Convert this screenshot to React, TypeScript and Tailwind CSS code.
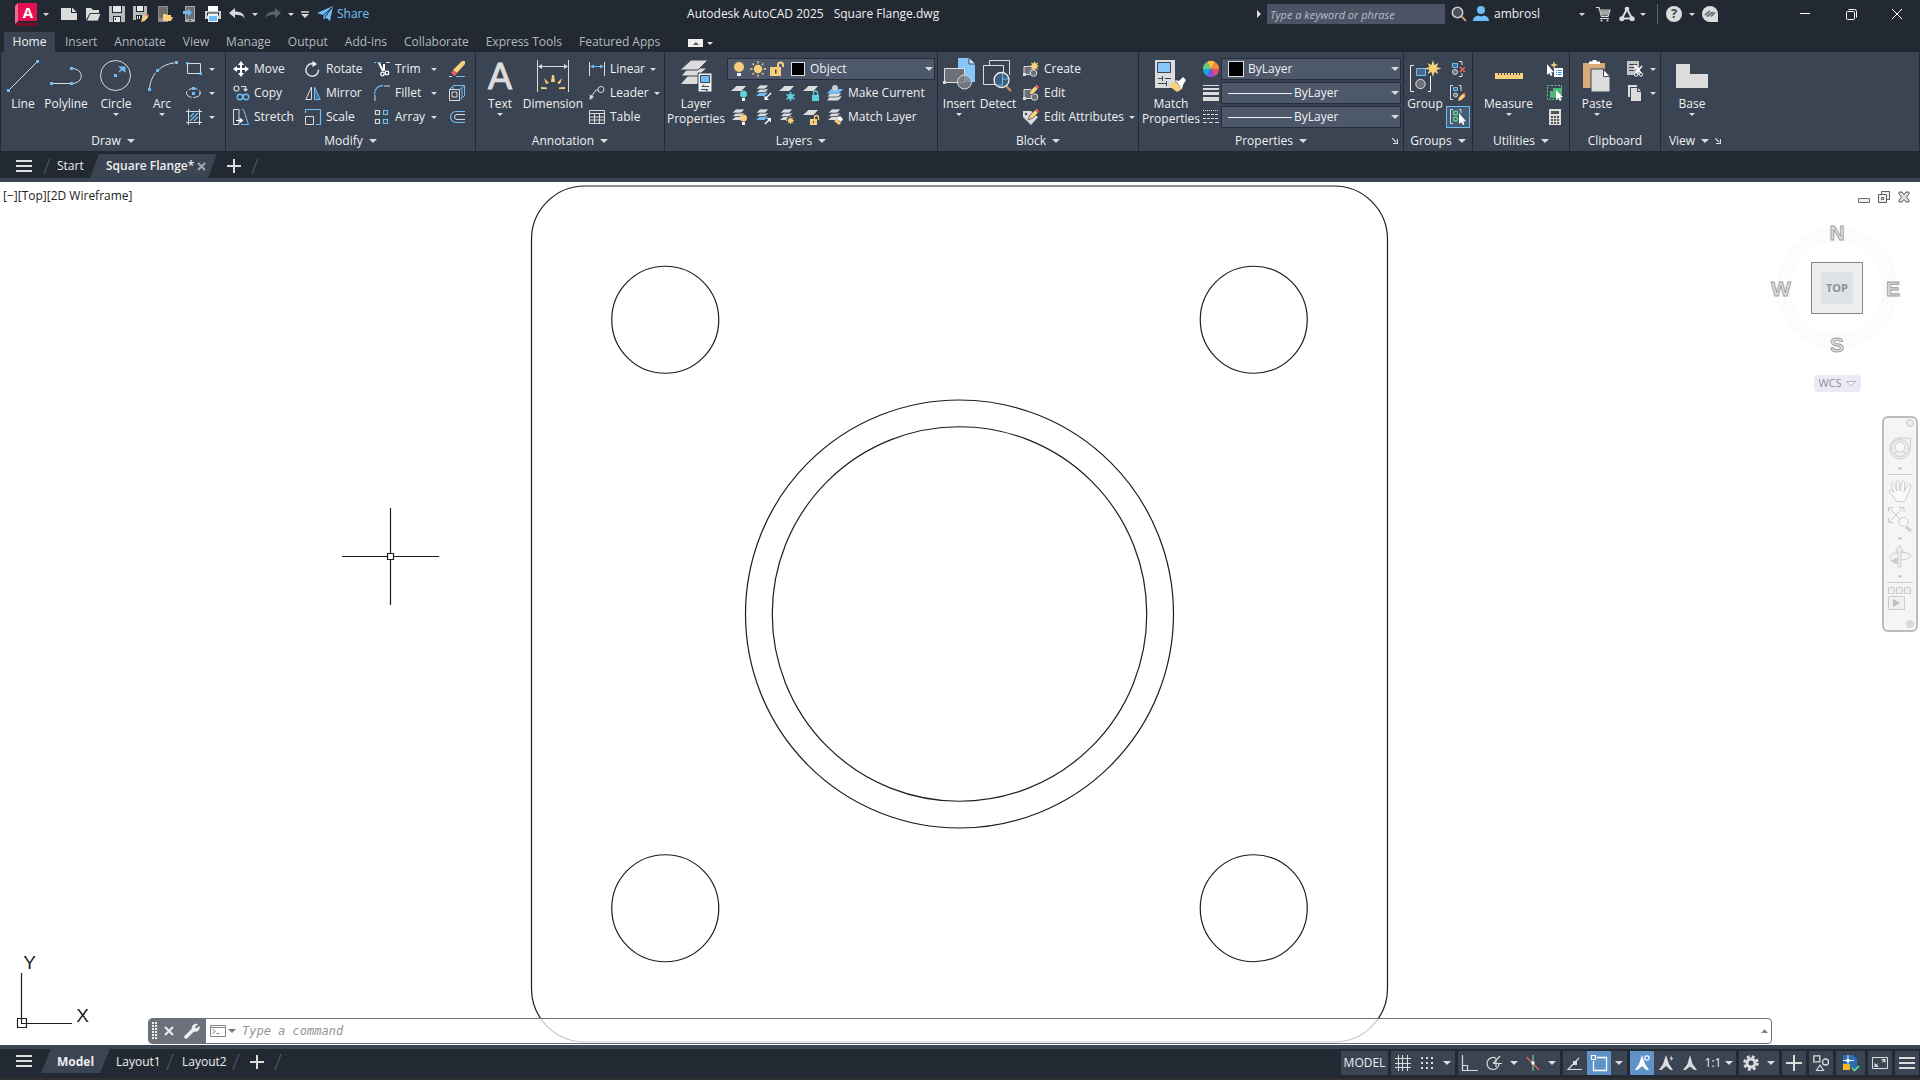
import type { ReactNode } from "react";
import clsx from "clsx";

const L = "#dcdcdc";
const B = "#6fbdf7";
const Y = "#f8cf7b";
const T = "#5fd3dc";
const R = "#f0605f";
const G = "#5ed18a";

const pencil = (
  <g>
    <path d="M8 16l1-3.500 4-4 2.500 2.500-4 4z" fill={Y} />
    <path d="M13 8.500l1-1 2 2-1 1.500z" fill={R} />
  </g>
);
const sheets = (c1: string, c2: string, c3: string) => (
  <g>
    <path d="M5 7.500h8l-3.500 3.500H1z" fill={c3} />
    <path d="M5 4h9l-4 3.500H1z" fill={c2} stroke="#3b4453" strokeWidth=".7" />
    <path d="M5 0h9l-4 4H1z" fill={c1} stroke="#3b4453" strokeWidth=".7" />
  </g>
);
const sheet = <path d="M5.500 1H15l-4.500 5H0z" fill={L} />;
const bulb = (c: string) => (
  <g>
    <circle cx="12.500" cy="9" r="3.500" fill={c} />
    <path d="M11 13h3v3h-3z" fill="#f5f5f5" />
  </g>
);

// 16 x 16 glyphs
const SMALL: Record<string, ReactNode> = {
  new: <><path d="M0 2h10v5h6v7H0z" fill={L} /><path d="M11 1.500L15.500 6H11z" fill={L} /></>,
  open: <><path d="M1 14V2h5l2 2h6v3H5z" fill={L} /><path d="M5 7.500h11L13 15H1.500z" fill={L} stroke="#222933" strokeWidth=".8" /></>,
  save: <><path d="M0 0h16v16H0z" fill="#b9b9b9" /><path d="M3 0h10v7H3zM4 10h8v6H4z" fill="#222933" /><path d="M4 0h8v6H4zM5 11h6v5H5z" fill="#e8e8e8" /><path d="M6 12h1v2H6z" fill="#222933" /></>,
  saveas: <><path d="M0 0h14v8l-5 6H0z" fill="#b9b9b9" /><path d="M3 0h8v6H3zM3 9h6v5H3z" fill="#222933" /><path d="M4 0h6v5H4zM4 10h1v3H4zM6 10h1v3H6z" fill="#e8e8e8" />{pencil}</>,
  openweb: <><path d="M1 0h10v16H1z" fill="#8d8d8d" /><path d="M2 1h8v11H2z" fill="#6b6b6b" /><path d="M6 15V8h3l1 1h4v2h2l-2 4z" fill={Y} /></>,
  saveweb: <><path d="M4 0h10v16H4z" fill="#a8a8a8" /><path d="M5 1h8v12H5z" fill="#6f6f6f" /><path d="M8 14h2v1H8z" fill="#333" /><path d="M2 5h5V2.500L11 6.500 7 10.500V8H2z" fill={B} /></>,
  print: <><path d="M3 0h10v5H3z" fill="#fff" /><path d="M0 5h16v8H0z" fill="#cfcfcf" /><path d="M2 6.500h12v3H2z" fill="#222933" /><path d="M3 7.500h10V16H3z" fill="#f1f1f1" /><path d="M4 10h8v5H4z" fill={B} /></>,
  undo: <path d="M0 7l6-5v3.500c6 0 9.500 2.500 9.500 7C14 9.500 11 8.800 6 8.800V12z" fill={L} />,
  redo: <path d="M16 7l-6-5v3.500c-6 0-9.500 2.500-9.500 7C2 9.500 5 8.800 10 8.800V12z" fill="#5b616c" />,
  share: <><path d="M0 7L16 0 8 12 6 9z" fill={B} /><path d="M16 0l-3 15-4-3.500L6 14V9.500L16 0z" fill={B} /><path d="M6 14V9.500L15 1.500 8 11" fill="none" stroke="#222933" /></>,
  search: <><path d="M10 10l5 5" stroke="#c99a5f" strokeWidth="2" /><circle cx="6.500" cy="6.500" r="5.200" fill="#4a4f59" stroke="#c8c8c8" strokeWidth="1.600" /></>,
  user: <><circle cx="8" cy="4" r="4" fill={B} /><path d="M0 15c0-4 3-5 5-5.500l3 1 3-1c2 .5 5 1.500 5 5.500z" fill={B} /></>,
  cart: <><path d="M1 1.500h3l2.500 9H13L15 4H4.500" fill="none" stroke={L} strokeWidth="1.200" /><path d="M5 4.500h9.500L13 9.500H6.300z" fill="#a6a6a6" /><path d="M5 12.500h9" stroke={L} /><circle cx="6.500" cy="14.500" r="1" fill={L} /><circle cx="12.500" cy="14.500" r="1" fill={L} /></>,
  apps: <><path d="M8 3L3 12.500h10z" fill="none" stroke={L} strokeWidth="2" /><circle cx="8" cy="3" r="2.300" fill={L} /><circle cx="2.800" cy="12.800" r="2.500" fill={L} /><circle cx="13.200" cy="12.800" r="2.500" fill={L} /></>,
  assist: <><path d="M8 0a8 8 0 018 8v8H8A8 8 0 018 0z" fill={L} /><path d="M3 9l5-4M5 10.500L11 6M9 10.500l4-4" stroke="#666d78" strokeWidth="1.700" /></>,
  rect: <><path d="M1.500 2.500h13v10h-13z" fill="none" stroke={L} /><path d="M0 1h2.500v2.500H0zM13.500 11.500H16V14h-2.500z" fill={B} /></>,
  ellipse: <><ellipse cx="7.500" cy="8" rx="7" ry="4.500" fill="none" stroke={L} strokeDasharray="9 2" /><path d="M6 2h3v3H6zM6 7h3v3H6zM13 7h2v2h-2z" fill={B} /></>,
  hatch: <><path d="M2.500 0v16M13.500 0v16M0 2.500h16M0 13.500h16" stroke={L} /><path d="M4 8l4-4M4 12l8-8M8 12l4-4" stroke={B} strokeWidth="1.400" /></>,
  move: <path d="M8 0l3 4H9v3h3V5l4 3-4 3V9H9v3h2l-3 4-3-4h2V9H4v2L0 8l4-3v2h3V4H5z" fill="#fff" />,
  rotate: <><path d="M9.500 2.800a6.300 6.300 0 105 5.800" fill="none" stroke={L} strokeWidth="1.600" transform="translate(-1 0)" /><path d="M7.500 0L12 3 7.500 6z" fill="#fff" /></>,
  trim: <><path d="M0 1.500h7" stroke={B} strokeDasharray="2 1" /><path d="M12 1.500h4" stroke={L} /><path d="M5 2l4 8M10 3v7" stroke="#fff" strokeWidth="2" /><circle cx="8.500" cy="13" r="1.800" fill="none" stroke="#fff" strokeWidth="1.300" /><circle cx="13" cy="12" r="1.800" fill="none" stroke="#fff" strokeWidth="1.300" /></>,
  erase: <><path d="M13 0h3v3L8 12 4 9z" fill={Y} /><path d="M4 9l4 3.500L5.500 15 2 12z" fill={R} /><path d="M0 15.500h3" stroke={L} /><path d="M7 15.500h9" stroke={B} /></>,
  copy: <><circle cx="3.500" cy="3.500" r="2.500" fill="none" stroke={L} strokeWidth="1.200" /><path d="M8 1.500h4.500V5M10.500 4l2 2 2-2" fill="none" stroke={L} strokeWidth="1.200" /><circle cx="7" cy="12" r="2.700" fill="none" stroke={B} strokeWidth="1.400" /><circle cx="13" cy="12" r="2.700" fill="none" stroke={B} strokeWidth="1.400" /></>,
  mirror: <><path d="M6.500 2v12.500H.8z" fill="none" stroke={L} /><path d="M9.500 2v12.500h5.700z" fill="#3f6f96" stroke={B} /></>,
  fillet: <><path d="M.5 9C.5 4 4 .5 9 .5" fill="none" stroke={B} strokeWidth="1.300" /><path d="M1 10v6M10 1h6" stroke={L} /></>,
  box: <><path d="M.5 4.500h10v11H.5zM3 7h5v5H3z" fill="none" stroke={L} /><path d="M.5 4.500l4-4h11v10l-4 4M10.500 4.500l5-4M4 4V1M13 3v10" fill="none" stroke={B} /></>,
  stretch: <><path d="M.5.500H6v15H.5z" fill="none" stroke={L} /><path d="M9 .5h1.500L15.500 15.500H8" fill="none" stroke={B} /><path d="M3 11.500h5M7 9.500l3 2-3 2z" fill="#fff" stroke="#fff" /></>,
  scale: <><path d="M.5 4V.5h15v15H11" fill="none" stroke={B} strokeWidth="1.200" /><path d="M.5 7.500h8v8h-8z" fill="none" stroke={L} /></>,
  array: <><path d="M1.500 1.500h4v4h-4zM1.500 10.500h4v4h-4z" fill="none" stroke={L} strokeWidth="1.200" /><path d="M9.500 1.500h4v4h-4zM9.500 10.500h4v4h-4z" fill="none" stroke={B} strokeWidth="1.200" /></>,
  offset: <><path d="M16 2.500H7a5.500 5.500 0 000 11h9" fill="none" stroke={B} strokeWidth="1.200" /><path d="M16 5.500H8a2.500 2.500 0 000 5h8" fill="none" stroke={L} /></>,
  linear: <><path d="M.5 1v14M15.500 1v14" stroke={L} /><path d="M2 5.500h12" stroke={B} /><path d="M1 5.500l4-2v4zM15 5.500l-4-2v4z" fill={B} /></>,
  leader: <><circle cx="12" cy="4.500" r="3" fill="none" stroke={L} /><path d="M9 5H7L2 12" fill="none" stroke={L} /><path d="M.5 15l.5-5.500 4 2.500z" fill={L} /></>,
  table: <path d="M.5 1.500h15v13H.5zM.5 4.500h15M.5 8h15M.5 11h15M5.500 4v10M10.500 4v10" fill="none" stroke={L} />,
  bulb: <><circle cx="8" cy="6" r="5" fill={Y} /><path d="M6 12h4v3H6z" fill="#f5f5f5" /></>,
  sun: <><circle cx="8" cy="8" r="4.200" fill={Y} /><path d="M8 0v2.500M8 13.500V16M0 8h2.500M13.500 8H16M2.500 2.500l1.500 1.500M12 12l1.500 1.500M13.500 2.500L12 4M4 12l-1.500 1.500" stroke={Y} strokeWidth="1.300" /></>,
  unlock: <><path d="M1 6h11v9H1z" fill={Y} /><path d="M9 7V4a2.500 2.500 0 015 0v2" fill="none" stroke={Y} strokeWidth="2" /><path d="M6 8.500h1.500v4H6z" fill="#3b4453" /></>,
  layoff: <>{sheet}{bulb(T)}</>,
  layiso: <>{sheets(L, L, B)}<path d="M16 8l-5 5" stroke="#fff" strokeWidth="1.400" /><path d="M9.500 10.500V15H14z" fill="#fff" /></>,
  layfrz: <>{sheet}<path d="M11.500 7v9M7.500 9.500l8 4.500M15.500 9.500l-8 4.500" stroke={T} strokeWidth="1.500" /><circle cx="11.500" cy="11.500" r="2.300" fill="none" stroke={T} /></>,
  laylck: <>{sheet}<path d="M9 10h7v6H9z" fill={T} /><path d="M10.500 10V8a2 2 0 014 0v2" fill="none" stroke={T} strokeWidth="1.300" /></>,
  laycur: <><path d="M3 11.500h12l-4 4H0z" fill={L} /><path d="M3 8h12l-4 4H0z" fill={L} stroke="#3b4453" strokeWidth=".7" /><path d="M4 4h12l-4 4.500H0z" fill={B} /><circle cx="8" cy="3" r="3" fill="#c9c9c9" /></>,
  layon: <>{sheets(L, L, L)}{bulb(Y)}</>,
  layuniso: <>{sheets(L, L, B)}<path d="M10 15l4-4" stroke="#fff" strokeWidth="1.400" /><path d="M11.500 9H16v4.500z" fill="#fff" /></>,
  laythw: <>{sheets(L, L, L)}<circle cx="11.500" cy="11.500" r="4" fill="#3b4453" /><circle cx="11.500" cy="11.500" r="2.500" fill={Y} /><path d="M11.500 7v9M7 11.500h9M8.500 8.500l6 6M14.500 8.500l-6 6" stroke={Y} strokeDasharray="1.300 5.500" /></>,
  layulk: <>{sheet}<path d="M7 10h7v6H7z" fill={Y} /><path d="M11.500 10V8.500a2 2 0 014 0V11" fill="none" stroke={Y} strokeWidth="1.300" /><path d="M10 12h1v2h-1z" fill="#3b4453" /></>,
  laymch: <>{sheets(L, L, L)}<path d="M7 12l3-2 4 4-2 2z" fill={Y} /><path d="M10 10l3-3 3 3-2 3z" fill="#fff" /></>,
  create: <><path d="M1 5.500h9v8H1z" fill="#6b7079" stroke={L} /><path d="M0 12h3v3H0z" fill={L} /><circle cx="10.500" cy="12" r="3.300" fill="#6b7079" stroke={L} /><path d="M11.500 0l1 2.500 2.500-1-1 2.500 2 1-2 1 1 2.500-2.500-1-1 2.500-1-2.500-2.500 1 1-2.500-2-1 2-1-1-2.500 2.500 1z" fill={Y} /></>,
  edit: <><path d="M1 4.500h9v9H1z" fill="#6b7079" stroke={L} /><path d="M0 12h3v3H0z" fill={L} /><circle cx="11.500" cy="12" r="3.300" fill="#6b7079" stroke={L} /><path d="M6 10l1-4 5-5 3 3-5 5z" fill={Y} stroke="#3b4453" strokeWidth=".7" /><path d="M12 1l1.500-1.500L16 2l-1 2z" fill={R} /></>,
  attr: <><path d="M0 2h8l7 6-7 8-8-8z" fill={L} /><circle cx="3" cy="5" r="1.200" fill="#3b4453" /><path d="M5 11l2-5 5-5 3 3-5 5z" fill={Y} stroke="#3b4453" strokeWidth=".7" /><path d="M12 1l1.500-1.500L16 2l-1 2z" fill={R} /></>,
  wheel: <><path d="M8 8L4 1a8 8 0 018 0z" fill="#ffc04a" /><path d="M8 8l4-7a8 8 0 014 7z" fill="#f98a3c" /><path d="M8 8h8a8 8 0 01-4 7z" fill="#e64f6b" /><path d="M8 8l4 7a8 8 0 01-8 0z" fill="#8a4ee8" /><path d="M8 8l-4 7a8 8 0 01-4-7z" fill="#18a9d8" /><path d="M8 8H0a8 8 0 014-7z" fill="#5fce7d" /></>,
  weight: <path d="M0 0h16v1H0zM0 3h16v2H0zM0 7h16v3H0zM0 12h16v4H0z" fill={L} />,
  ltype: <><path d="M0 1.500h16" stroke={L} strokeDasharray="1 1" /><path d="M0 5.500h16M0 9.500h16" stroke={L} strokeDasharray="3 1" /><path d="M0 13.500h16" stroke={L} strokeDasharray="4 2" /></>,
  ungroup: <><path d="M2.500 2.500h5v4h-5z" fill="#3f6f96" stroke={B} /><circle cx="5" cy="11" r="2.500" fill="#6b7079" stroke={L} /><path d="M9 .5h3V4M9 15.500h3V12" fill="none" stroke={L} /><path d="M10 6l5 5M15 6l-5 5" stroke={R} strokeWidth="1.600" /></>,
  groupedit: <><path d="M3 .5H.5v14H3M9 .5h2V6" fill="none" stroke={L} /><path d="M3.500 2.500h4v3h-4z" fill="#3f6f96" stroke={B} /><circle cx="5.500" cy="10" r="2" fill="#6b7079" stroke={L} />{pencil}</>,
  groupsel: <><path d="M3 .5H.5v14H3M9 .5h2V4" fill="none" stroke={L} /><path d="M3.500 2.500h4v3h-4zM5.500 8a2 2 0 100 4 2 2 0 000-4z" fill="none" stroke={G} strokeWidth="1.300" /><path d="M9 4v11l2.300-2 1.500 3 1.700-.8-1.300-3H16z" fill="#fff" /></>,
  quick: <><path d="M0 3v11l2.300-2 1.500 3 1.700-.8-1.300-3H7z" fill="#fff" /><path d="M7 0l1 3 3 1-3 1-1 3-1-3-3-1 3-1z" fill={Y} /><path d="M7 7h9v9H7z" fill="#fff" /><path d="M9 9.500h1M9 11.500h1M9 13.500h1M11 9.500h3.500M11 11.500h3.500M11 13.500h3.500" stroke="#2588d8" /></>,
  selall: <><path d="M.5.500h14v14H.5z" fill="none" stroke={G} strokeDasharray="2 1.500" /><path d="M3 6h3V3h9v7h-4v3H3z" fill="#4fb77a" /><path d="M9 5v10l2.300-2 1.500 3 1.700-.8-1.300-3H16z" fill="#fff" /></>,
  calc: <><path d="M2 0h12v16H2z" fill={L} /><path d="M4 2h8v3H4zM4 7h2v2H4zM7 7h2v2H7zM10 7h2v2h-2zM4 10h2v2H4zM7 10h2v2H7zM10 10h2v2h-2zM4 13h2v2H4zM7 13h2v2H7zM10 13h2v2h-2z" fill="#555" /></>,
  cut: <><path d="M0 0h12v14H0z" fill="#c4c4c4" /><path d="M2 3.500h8M2 6.500h5M2 9.500h5" stroke="#3b4453" /><path d="M7 4l7 8M15 5l-6 7" stroke="#fff" strokeWidth="1.600" /><circle cx="9" cy="13.500" r="1.700" fill="#3b4453" stroke="#fff" /><circle cx="14" cy="13.500" r="1.700" fill="#3b4453" stroke="#fff" /></>,
  copyclip: <><path d="M1 0v12h2V2h7V0z" fill={L} /><path d="M4 3h6v4h4v9H4zM11 3l3 3h-3z" fill={L} /></>,
  grid: <path d="M3.500 0v16M7.500 0v16M12.500 0v16M0 3.500h16M0 8.500h16M0 12.500h16" stroke={L} />,
  dots: <path d="M2 3h12M2 8h12M2 13h12" stroke={L} strokeWidth="2" strokeDasharray="2 3" />,
  ortho: <path d="M.5 0v15.500H16M.5 10.500h5v5" fill="none" stroke={L} strokeWidth="1.200" />,
  polar: <><path d="M13 8.500a6 6 0 11-3-5.200" fill="none" stroke={L} strokeWidth="1.200" /><path d="M7 8.500h9M7 8.500L14 1M10 4v8" fill="none" stroke={L} strokeWidth="1.200" /></>,
  iso: <><path d="M1.500 2L14 15" stroke={R} strokeWidth="1.300" /><path d="M8 0v16" stroke={G} strokeWidth="1.300" /><path d="M6.500 6.500h3v3h-3z" fill="#fff" /></>,
  track: <><path d="M15 14.500H1L12 3" fill="none" stroke={L} strokeWidth="1.200" /><path d="M6 6h4v4H6z" fill={L} /></>,
  osnap: <><path d="M6 2.500h9.500v13h-13V6" fill="none" stroke="#fff" strokeWidth="1.300" /><path d="M.5.500h4v4h-4z" fill="none" stroke="#fff" strokeWidth="1.200" /></>,
  anno1: <><path d="M8 0l3 9 4 6h-2.500L8 11l-4.500 4H1l4-6z" fill="#fff" /><circle cx="13" cy="3" r="2.200" fill="#5f93c8" stroke="#fff" strokeWidth="1.200" /></>,
  anno2: <><path d="M8 0l3 9 4 6h-2.500L8 11l-4.500 4H1l4-6z" fill={L} /><path d="M14 0l-3 4h2l-1 3 4-4h-2z" fill={L} stroke="#3b4453" strokeWidth=".5" /></>,
  anno3: <path d="M8 0l2.500 9 4.500 6h-2.500L8 11.500 3.500 15H1l4.500-6z" fill={L} />,
  gear: (
    <g fill="none" stroke={L}>
      <circle cx="8" cy="8" r="4" strokeWidth="3" />
      <circle cx="8" cy="8" r="6.300" strokeWidth="3" strokeDasharray="2.800 2.150" />
    </g>
  ),
  plus: <path d="M8 0v16M0 8h16" stroke={L} strokeWidth="2" />,
  shapes: <><path d="M.8.800h6v6h-6z" fill="none" stroke={L} strokeWidth="1.300" /><circle cx="12.500" cy="7" r="3" fill="none" stroke={L} strokeWidth="1.300" /><path d="M7 10l3.500 5.500h-7z" fill="none" stroke={L} strokeWidth="1.200" /></>,
  dwg: <><path d="M0 0h10l4 4v9H0z" fill="#2c6cb5" /><path d="M0 9h7v6H0z" fill="#f6b62a" /><path d="M5 0v9M0 5.500h11" stroke="#e8f1fa" /><path d="M3.500 4h3v3h-3z" fill="#fff" /><path d="M9 13l2.500 2.500L16 11" fill="none" stroke={G} strokeWidth="1.800" /></>,
  full: <><path d="M.5 2.500h15v11H.5z" fill="none" stroke={L} /><path d="M9 4h4.500v4zM7 12H2.500V8z" fill={L} /><path d="M4 10.500l2-2M12 5.500l-2 2" stroke={L} /></>,
  menu: <path d="M0 3h16M0 8h16M0 13h16" stroke={L} strokeWidth="2" />,
};

// 32 x 32 glyphs
const LARGE: Record<string, ReactNode> = {
  line: <><path d="M1.500 30.500l29-29" stroke={L} /><path d="M0 29h3v3H0zM29 0h3v3h-3z" fill={B} /></>,
  polyline: <><path d="M1.500 23.500h20M21.500 8.500c13 0 13 15 0 15" fill="none" stroke={L} /><path d="M0 22h3v3H0zM20 22h3v3h-3zM20 7h3v3h-3z" fill={B} /></>,
  circle: <><circle cx="15.500" cy="15.500" r="15" fill="none" stroke={L} /><path d="M14 14h3v3h-3z" fill={B} /><path d="M19 12l4-4" stroke={B} strokeWidth="1.500" /><path d="M18 6.500h7.500V13z" fill={B} /></>,
  arc: <><path d="M3.500 29.500C4 15 14 4 30.500 2.500" fill="none" stroke={L} strokeDasharray="18 4" /><path d="M2 28h3v3H2zM10 9h3v3h-3zM29 1h3v3h-3z" fill={B} /></>,
  text: <text x="16" y="29" textAnchor="middle" fontSize="36" className="font-['Liberation_Sans',sans-serif]" fill={L} stroke={L} strokeWidth="1">A</text>,
  dimension: <><path d="M.5 0v32M31.500 0v32M2 6.500h28" stroke={L} /><path d="M1 6.500L5 4v5zM31 6.500L27 4v5z" fill={L} /><path d="M15 15h2l1 7h-4zM7 18l5 5-3 1zM25 18l-5 5 3 1zM4 27l6 .5V29H4zM28 27l-6 .5V29h6z" fill={Y} /></>,
  layers: <><path d="M8 16h16l-7 8H1z" fill={L} /><path d="M8 8h19l-9 8H1z" fill={L} stroke="#3b4453" /><path d="M11 0h17L18 10H0z" fill={L} stroke="#3b4453" /><path d="M18 13h14v19H18z" fill="#f0f0f0" stroke="#3b4453" /><path d="M20.500 15.500h9v7h-9z" fill={B} stroke="#3b4453" /><path d="M22 26.500h7M21 29.500h7M24 24.500l-2 2M26 31l2-1.500" stroke="#3b4453" /></>,
  insert: <><path d="M15-2h11l6 6v18H15z" fill="#86c6fa" /><path d="M26-2v6h6" fill="#cfe8fd" stroke="#3b4453" /><path d="M1.500 8.500h20v14h-20z" fill="#6b7079" stroke={L} /><path d="M0 21h3v3H0z" fill={L} /><circle cx="21.500" cy="22" r="7" fill="#7d828a" fillOpacity=".8" stroke={L} /></>,
  detect: <><path d="M7.500 5V.5h20V15M1.500 5.500h20v19h-20z" fill="none" stroke={L} /><path d="M24 26l5 5" stroke="#c99a5f" strokeWidth="2" /><circle cx="19.500" cy="20" r="7.500" fill="#3f5f80" stroke="#f2f2f2" strokeWidth="1.300" /><path d="M20.500 13v12h-4M20.500 19h6" fill="none" stroke={B} /></>,
  match: <><path d="M0 0h20v28H0z" fill={L} /><path d="M2.500 2.500h13v10h-13z" fill="#86c6fa" stroke="#3b4453" /><path d="M3 18.500h4M10 18.500h6M7.500 16v5M3 23.500h8M11.500 21v5" stroke="#3b4453" /><path d="M14 26l6-5 7 8-5 3z" fill={Y} /><path d="M20 20l4 1 4-4 3 3-3 5-1 4z" fill="#fff" /></>,
  group: <><path d="M5 5.500H1.500v26H5M19 31.500h2.500V16" fill="none" stroke="#eee" /><path d="M7.500 8.500h9v7h-9z" fill="#4c6a8b" stroke={B} /><circle cx="11.500" cy="24" r="4.700" fill="#6b7079" stroke={L} /><path d="M24 0l1.500 5 4-2-2 4 5 1.500-5 1.500 2 4-4-2L24 17l-1.500-5-4 2 2-4-5-1.500 5-1.500-2-4 4 2z" fill={Y} /></>,
  measure: <><path d="M2 13h28v6H2z" fill={Y} /><path d="M5.500 13v2M8.500 13v2M11.500 13v2M14.500 13v2M17.500 13v2M20.500 13v2M23.500 13v2M26.500 13v2" stroke="#3b4453" /></>,
  paste: <><path d="M2 3h22v25H2z" fill="#d8ab76" /><path d="M8 4V1.500h3.500V0h4v1.500H19V4z" fill="#fff" /><path d="M10 9h13l6 7v16H10z" fill={L} stroke="#3b4453" /><path d="M22.500 9.500v7H29z" fill="#fff" stroke="#3b4453" /></>,
  base: <path d="M0 4h14v10h18v14H0z" fill={L} />,
};

function Icon({ name }: { name: string }) {
  return <svg width="16" height="16" viewBox="0 0 16 16" className="shrink-0 overflow-visible" aria-hidden="true">{SMALL[name]}</svg>;
}

function Caret({ big, className }: { big?: boolean; className?: string }) {
  return big ? (
    <svg width="8" height="4" className={clsx("shrink-0", className)} aria-hidden="true"><path d="M0 0h8L4 4z" fill={L} /></svg>
  ) : (
    <svg width="6" height="3" className={clsx("shrink-0", className)} aria-hidden="true"><path d="M0 0h6L3 3z" fill={L} /></svg>
  );
}

function IconButton({ name, className = "w-6" }: { name: string; className?: string }) {
  return (
    <button type="button" aria-label={name} className={clsx("flex h-6 shrink-0 items-center justify-center", className)}>
      <Icon name={name} />
    </button>
  );
}

function CaretButton({ label, big, className = "w-3" }: { label: string; big?: boolean; className?: string }) {
  return (
    <button type="button" aria-label={label} className={clsx("flex h-6 shrink-0 items-center justify-center", className)}>
      <Caret big={big} />
    </button>
  );
}

function BigTool({ icon, lines, menu, className }: { icon: string; lines: string[]; menu?: boolean; className: string }) {
  return (
    <button type="button" className={clsx("flex shrink-0 flex-col items-center pt-[3px]", className)}>
      <svg width="32" height="32" viewBox="0 0 32 32" className="overflow-visible" aria-hidden="true">{LARGE[icon]}</svg>
      <span className="mt-1 flex flex-col leading-[15px] whitespace-nowrap">
        {lines.map((l) => <span key={l}>{l}</span>)}
      </span>
      {menu && <Caret className="mt-0.5" />}
    </button>
  );
}

function Tool({ icon, label, menu }: { icon: string; label?: string; menu?: boolean }) {
  return (
    <button type="button" aria-label={label ?? icon} className="flex h-6 items-center gap-[5px] whitespace-nowrap">
      <Icon name={icon} />
      {label && <span>{label}</span>}
      {menu && <Caret className={label ? "ml-auto" : "ml-0.5"} />}
    </button>
  );
}

function Launcher() {
  return (
    <button type="button" aria-label="Panel settings">
      <svg width="6" height="6" aria-hidden="true"><path d="M0 0l4 4M5.500 1v4.500H1" fill="none" stroke={L} strokeWidth="1.200" /></svg>
    </button>
  );
}

type PanelProps = { title: string; menu?: boolean; launcher?: "edge" | "inline"; className: string; children: ReactNode };

function Panel({ title, menu = true, launcher, className, children }: PanelProps) {
  return (
    <section aria-label={title} className={clsx("flex shrink-0 flex-col pt-[5px]", className)}>
      <div className="flex h-[73px]">{children}</div>
      <div className="flex h-[21px] items-center justify-center">
        <span className="flex flex-1" />
        <button type="button" className="flex items-center gap-1.5">
          {title}
          {menu && <Caret big />}
        </button>
        {launcher === "inline" && <span className="ml-1.5 flex"><Launcher /></span>}
        <span className="flex flex-1 justify-end">{launcher === "edge" && <span className="mr-[5px] flex"><Launcher /></span>}</span>
      </div>
    </section>
  );
}

function Combo({ label, value, children, className }: { label: string; value: string; children?: ReactNode; className?: string }) {
  return (
    <label className={clsx("flex h-[22px] items-center border border-[#262e39] bg-[#4d586b]", className)}>
      {children}
      <select aria-label={label} defaultValue={value} className="min-w-0 flex-1 appearance-none bg-transparent outline-none">
        <option>{value}</option>
      </select>
      <Caret big className="mr-px" />
    </label>
  );
}

function TitleBar() {
  return (
    <header className="flex h-8 items-start justify-between">
      <div className="flex h-7 items-center pl-[15px]">
        <button type="button" aria-label="Application menu" className="flex items-center gap-1">
          <svg width="24" height="24" viewBox="0 0 24 24" aria-hidden="true">
            <path d="M0 4l3-3v20h21v1l-3 2H0z" fill="#7c0b2a" />
            <path d="M3 1h19v18H3z" fill="#e51050" />
            <path d="M0 4l3-3v18l-3 3z" fill="#ec6d8e" />
            <text x="13" y="16" textAnchor="middle" fontSize="15" fontWeight="700" fill="#fff">A</text>
          </svg>
          <Caret />
        </button>
        <span className="ml-2 flex">
          {["new", "open", "save", "saveas", "openweb", "saveweb", "print", "undo"].map((n) => <IconButton key={n} name={n} />)}
        </span>
        <CaretButton label="Undo list" />
        <IconButton name="redo" />
        <CaretButton label="Redo list" />
        <button type="button" aria-label="Customize" className="flex w-4 justify-center">
          <svg width="8" height="7"><path d="M0 1h8" stroke={L} strokeWidth="1.500" /><path d="M0 3h8L4 7z" fill={L} /></svg>
        </button>
        <button type="button" className="ml-1 flex items-center gap-1 text-[#74c1f5]"><Icon name="share" />Share</button>
      </div>
      <h1 className="flex h-7 items-center gap-2.5 text-[#f0f0f0]"><span>Autodesk AutoCAD 2025</span><span>Square Flange.dwg</span></h1>
      <div className="flex h-7 items-center">
        <svg width="4" height="8" className="mr-1.5"><path d="M0 0v8l4-4z" fill={L} /></svg>
        <input aria-label="Search" placeholder="Type a keyword or phrase" className="h-5 w-[178px] bg-[#4b5365] px-[3px] text-[11px] italic outline-none placeholder:text-[#b9bec8]" />
        <IconButton name="search" className="w-7" />
        <button type="button" className="flex items-center gap-[5px]"><Icon name="user" /><span className="w-[82px] text-left">ambrosl</span></button>
        <CaretButton label="Account menu" />
        <span className="ml-[3px] flex"><IconButton name="cart" /></span>
        <IconButton name="apps" />
        <CaretButton label="Apps menu" className="w-2" />
        <span className="ml-2.5 h-5 w-px bg-[#596173]" />
        <button type="button" aria-label="Help" className="ml-2 flex size-4 items-center justify-center rounded-full bg-[#dcdcdc] text-[13px] font-bold text-[#3b4453]">?</button>
        <CaretButton label="Help menu" className="w-5" />
        <IconButton name="assist" className="w-4" />
        <span className="ml-16 flex">
          <button type="button" aria-label="Minimize" className="flex h-7 w-[46px] items-center justify-center"><svg width="10" height="10"><path d="M0 4.500h10" stroke="#fff" /></svg></button>
          <button type="button" aria-label="Restore" className="flex h-7 w-[46px] items-center justify-center"><svg width="11" height="11" fill="none" stroke="#fff"><rect x=".5" y="2.500" width="8" height="8" rx="1" /><path d="M2.500.500h6a2 2 0 012 2v6" /></svg></button>
          <button type="button" aria-label="Close" className="flex h-7 w-[46px] items-center justify-center"><svg width="10" height="10"><path d="M0 0l10 10M10 0L0 10" stroke="#fff" /></svg></button>
        </span>
      </div>
    </header>
  );
}

const TABS = ["Insert", "Annotate", "View", "Manage", "Output", "Add-ins", "Collaborate", "Express Tools", "Featured Apps"];

function RibbonTabs() {
  return (
    <nav className="flex h-5 items-center pl-1">
      <button type="button" className="h-5 w-[51px] bg-[#3b4453]">Home</button>
      <div className="flex gap-[17px] pl-2.5 text-[#b3b8be]">
        {TABS.map((t) => <button type="button" key={t}>{t}</button>)}
      </div>
      <button type="button" aria-label="Minimize ribbon" className="mt-0.5 mr-1 ml-7 flex h-2 w-[15px] items-center justify-center bg-[#f0f0f0]">
        <svg width="6" height="3"><path d="M3 0l3 3H0z" fill="#555" /></svg>
      </button>
      <Caret className="mt-0.5" />
    </nav>
  );
}

function Ribbon() {
  return (
    <div className="mx-px flex h-[99px] divide-x divide-[#222933] bg-[#3b4453]">
      <Panel title="Draw" className="w-[225px]">
        <BigTool icon="line" lines={["Line"]} className="w-11" />
        <BigTool icon="polyline" lines={["Polyline"]} className="w-[42px]" />
        <BigTool icon="circle" lines={["Circle"]} menu className="w-[58px]" />
        <BigTool icon="arc" lines={["Arc"]} menu className="w-[34px]" />
        <div className="flex flex-col pl-[7px]">
          <Tool icon="rect" menu /><Tool icon="ellipse" menu /><Tool icon="hatch" menu />
        </div>
      </Panel>
      <Panel title="Modify" className="w-[250px]">
        <div className="flex w-[79px] flex-col pl-[7px]">
          <Tool icon="move" label="Move" /><Tool icon="copy" label="Copy" /><Tool icon="stretch" label="Stretch" />
        </div>
        <div className="flex w-[69px] flex-col">
          <Tool icon="rotate" label="Rotate" /><Tool icon="mirror" label="Mirror" /><Tool icon="scale" label="Scale" />
        </div>
        <div className="flex w-[75px] flex-col pr-3">
          <Tool icon="trim" label="Trim" menu /><Tool icon="fillet" label="Fillet" menu /><Tool icon="array" label="Array" menu />
        </div>
        <div className="flex flex-col">
          <Tool icon="erase" /><Tool icon="box" /><Tool icon="offset" />
        </div>
      </Panel>
      <Panel title="Annotation" className="w-[189px]">
        <BigTool icon="text" lines={["Text"]} menu className="w-12" />
        <BigTool icon="dimension" lines={["Dimension"]} className="w-[58px]" />
        <div className="flex w-[74px] flex-col pl-[7px]">
          <Tool icon="linear" label="Linear" menu /><Tool icon="leader" label="Leader" menu /><Tool icon="table" label="Table" />
        </div>
      </Panel>
      <Panel title="Layers" className="w-[273px]">
        <BigTool icon="layers" lines={["Layer", "Properties"]} className="w-[62px]" />
        <div className="flex flex-1 flex-col pr-0.5">
          <Combo label="Layer" value="Object" className="my-px">
            <span className="flex gap-[3px] pr-[5px] pl-[3px]">
              <Icon name="bulb" /><Icon name="sun" /><Icon name="unlock" />
              <span className="ml-[3px] size-3.5 self-center border border-[#e0e0e0] bg-black" />
            </span>
          </Combo>
          <div className="flex h-6 items-center">
            {["layoff", "layiso", "layfrz", "laylck"].map((n) => <IconButton key={n} name={n} />)}
            <span className="ml-1"><Tool icon="laycur" label="Make Current" /></span>
          </div>
          <div className="flex h-6 items-center">
            {["layon", "layuniso", "laythw", "layulk"].map((n) => <IconButton key={n} name={n} />)}
            <span className="ml-1"><Tool icon="laymch" label="Match Layer" /></span>
          </div>
        </div>
      </Panel>
      <Panel title="Block" className="w-[201px]">
        <BigTool icon="insert" lines={["Insert"]} menu className="w-[42px]" />
        <BigTool icon="detect" lines={["Detect"]} className="w-9" />
        <div className="flex w-[116px] flex-col pl-[7px]">
          <Tool icon="create" label="Create" /><Tool icon="edit" label="Edit" /><Tool icon="attr" label="Edit Attributes" menu />
        </div>
      </Panel>
      <Panel title="Properties" launcher="edge" className="w-[265px]">
        <BigTool icon="match" lines={["Match", "Properties"]} className="w-16" />
        <div className="flex flex-col"><Tool icon="wheel" /><Tool icon="weight" /><Tool icon="ltype" /></div>
        <div className="flex flex-1 flex-col gap-0.5 pt-px pr-0.5 pl-0.5">
          <Combo label="Object color" value="ByLayer"><span className="mr-1 ml-1.5 size-4 border border-[#e0e0e0] bg-black" /></Combo>
          <Combo label="Lineweight" value="ByLayer"><span className="mr-0.5 ml-1.5 h-px w-16 bg-[#eee]" /></Combo>
          <Combo label="Linetype" value="ByLayer"><span className="mr-0.5 ml-1.5 h-px w-16 bg-[#eee]" /></Combo>
        </div>
      </Panel>
      <Panel title="Groups" className="w-[69px]">
        <BigTool icon="group" lines={["Group"]} className="w-[42px]" />
        <div className="flex flex-col">
          <IconButton name="ungroup" /><IconButton name="groupedit" />
          <button type="button" aria-label="Group selection" aria-pressed="true" className="mt-px flex h-[22px] w-6 items-center justify-center border border-[#6fbdf7] bg-[#475b75]"><Icon name="groupsel" /></button>
        </div>
      </Panel>
      <Panel title="Utilities" className="w-[97px]">
        <BigTool icon="measure" lines={["Measure"]} menu className="w-[71px]" />
        <div className="flex flex-col pl-[3px]"><Tool icon="quick" /><Tool icon="selall" /><Tool icon="calc" /></div>
      </Panel>
      <Panel title="Clipboard" menu={false} className="w-[91px]">
        <BigTool icon="paste" lines={["Paste"]} menu className="w-[54px]" />
        <div className="flex flex-col pl-[3px]"><Tool icon="cut" menu /><Tool icon="copyclip" menu /></div>
      </Panel>
      <div className="flex flex-1">
        <Panel title="View" launcher="inline" className="w-[67px] pl-px">
          <BigTool icon="base" lines={["Base"]} menu className="w-[60px]" />
        </Panel>
      </div>
    </div>
  );
}

function Slash({ className }: { className?: string }) {
  return <svg width="8" height="16" className={className} aria-hidden="true"><path d="M1 16L7 0" stroke="#4d5666" strokeWidth="1.200" /></svg>;
}

function FileTabs() {
  return (
    <div className="flex h-[31px] items-center border-b-4 border-[#3b4453] bg-[#222933] pt-[3px] text-[#eee]">
      <button type="button" aria-label="Menu" className="ml-4"><Icon name="menu" /></button>
      <Slash className="ml-[11px]" />
      <button type="button" className="w-[39px] pl-1.5 text-left">Start</button>
      <div className="flex h-6 w-[127px] items-center bg-[#3b4453] pl-4 [clip-path:polygon(9px_0,100%_0,118px_100%,0_100%)]">
        <button type="button" className="w-[91px] text-left font-semibold whitespace-nowrap">Square Flange*</button>
        <button type="button" aria-label="Close tab"><svg width="9" height="9"><path d="M1 1l7 7M8 1L1 8" stroke="#a3a8b0" strokeWidth="2" /></svg></button>
      </div>
      <button type="button" aria-label="New tab" className="ml-2.5"><svg width="14" height="14"><path d="M7 0v14M0 7h14" stroke={L} strokeWidth="2" /></svg></button>
      <Slash className="ml-2.5" />
    </div>
  );
}

function Drawing() {
  const holes = [[665.25, 319.75], [1253.75, 319.75], [665.25, 908.25], [1253.75, 908.25]];
  return (
    <svg viewBox="0 182 1920 863" className="absolute inset-0 size-full" fill="none" stroke="#1e1e1e" strokeWidth="1.200" aria-label="Square flange">
      <rect x="531.500" y="186" width="856" height="856" rx="53.500" />
      {holes.map(([x, y]) => <circle key={`${x}-${y}`} cx={x} cy={y} r="53.500" />)}
      <circle cx="959.500" cy="614" r="214" />
      <circle cx="959.500" cy="614" r="187.250" />
      <path d="M342 556.500h45M394 556.500h45M390.500 508v45M390.500 560v45M387.500 553.500h6v6h-6z" />
      <path d="M21.500 973v50.500H72M17.500 1018.500h9v9h-9z" />
      <g className="font-['Liberation_Sans',sans-serif]" fill="#1e1e1e" stroke="none" fontSize="19" textAnchor="middle">
        <text x="29.500" y="969">Y</text>
        <text x="82.500" y="1022">X</text>
      </g>
    </svg>
  );
}

function ViewCube() {
  return (
    <div className="absolute top-9 right-6 flex w-[118px] flex-col items-center">
      <svg width="134" height="140" viewBox="-67 -70 134 140" aria-label="View cube">
        <circle r="53.500" fill="none" stroke="#fcfcfc" strokeWidth="13" />
        <circle r="60" fill="none" stroke="#f8f8f8" />
        <circle r="47" fill="none" stroke="#f9f9f9" />
        <rect x="-25.500" y="-25.500" width="51" height="51" fill="#eeeeee" stroke="#858585" />
        <rect x="-16" y="-16" width="32" height="32" fill="#dfe3e7" />
        <text y="4" fontSize="11" fontWeight="700" textAnchor="middle" fill="#8d9196">TOP</text>
        <g className="font-['Liberation_Sans',sans-serif]" fontSize="21" fontWeight="700" textAnchor="middle" fill="#dcdcdc" stroke="#a0a0a0" strokeWidth=".9">
          <text y="-48">N</text>
          <text y="64">S</text>
          <text x="-56" y="8">W</text>
          <text x="56" y="8">E</text>
        </g>
      </svg>
      <button type="button" className="mt-[17px] flex h-[17px] w-[47px] items-center justify-center gap-1 rounded bg-[#ebebf5] text-[11px] text-[#8f8f96]">
        WCS
        <svg width="10" height="6"><path d="M.5.500h9L5 5z" fill="#f6f6fb" stroke="#b5b5bd" /></svg>
      </button>
    </div>
  );
}

function NavBar() {
  return (
    <div className="absolute top-[234px] right-0.5 w-9 rounded-md border-2 border-[#bdbdbd] bg-[#f5f5f5]">
      <svg width="32" height="212" viewBox="1884 418 32 212" fill="#efefef" stroke="#cdcdcd" aria-label="Navigation bar">
        <circle cx="1910" cy="423" r="3.500" fill="#e2e2e2" /><path d="M1908.500 421.500l3 3M1911.500 421.500l-3 3" stroke="#fff" />
        <path d="M1900 438h10.500v10a10.500 10.500 0 11-10.500-10z" /><circle cx="1900" cy="448" r="8.500" /><circle cx="1900" cy="447" r="5" fill="#f7f7f7" /><path d="M1894 453l3-2M1906 453l-3-2" />
        <path d="M1887 474.500h26M1887 582.500h26" />
        <path d="M1897.500 467.500h5l-2.500 2.500zM1897.500 537.500h5l-2.500 2.500zM1897.500 575.500h5l-2.500 2.500z" fill="#bdbdbd" stroke="none" />
        <path d="M1896 501c-2-5-6-7-7-10 1-2 3-1 5 2l-3-9c0-2 2-2 3 0l3 7-1-9c0-2 3-2 3 0l1 9 2-9c1-2 3-1 3 1l-1 9 4-7c1-2 3-1 3 1l-4 10c-1 3-2 4-3 6z" fill="#fbfbfb" />
        <path d="M1889 508l14 14M1903 508l-14 14M1888.500 512v-4.500h5M1899 507.500h5v4.500M1888.500 518v4.500h5" fill="none" /><path d="M1906 527l5 4" strokeWidth="3" /><circle cx="1903.500" cy="522" r="4.500" fill="#f9f9f9" />
        <path d="M1910 554a11 4 0 10-18 5M1910 554c3 4-6 7-16 6" fill="none" /><path d="M1898 567v-16h-2.500l4-5.500 4 5.500h-2.500v16z" /><path d="M1891 561l6-3v6z" fill="#cdcdcd" />
        <path d="M1888.500 587.500h6v6h-6zM1896.500 587.500h6v6h-6zM1904.500 587.500h6v6h-6zM1888.500 596.500h16v13h-16z" /><path d="M1893 599l7 4-7 4z" fill="#bdbdbd" stroke="none" />
        <circle cx="1910" cy="624" r="3.500" fill="#e2e2e2" /><path d="M1908 623h4M1908.500 625h3" />
      </svg>
    </div>
  );
}

function CommandLine() {
  return (
    <form className="absolute right-[148px] bottom-px left-[148px] flex h-[26px] overflow-hidden rounded-sm border border-[#6b717c] bg-white/75">
      <div className="flex w-[57px] shrink-0 items-center bg-[#6c717b] pl-[3px]">
        <svg width="5" height="18" aria-hidden="true"><path d="M1 0v18M4 0v18" stroke="#eee" strokeWidth="2" strokeDasharray="2 1" /></svg>
        <button type="button" aria-label="Close command line" className="ml-[7px]"><svg width="10" height="10"><path d="M1 1l8 8M9 1L1 9" stroke="#eee" strokeWidth="2" /></svg></button>
        <button type="button" aria-label="Customize" className="ml-2.5"><svg width="16" height="16"><path d="M2 14L10 6" stroke="#eee" strokeWidth="3.500" strokeLinecap="round" /><path d="M14 1l-3 3 1 1.500L15.500 3c1 4-2 6.500-5.500 5.500L8 6c-1-3 2-6 6-5z" fill="#eee" /></svg></button>
      </div>
      <button type="button" aria-label="Recent commands" className="ml-1 flex items-center gap-0.5">
        <svg width="16" height="12"><path d="M.5.500h15v11H.5zM1 2.500h14" fill="none" stroke="#858585" /><path d="M2.500 4.500l3 2-3 2M6.500 8.500h3" fill="none" stroke="#858585" /></svg>
        <svg width="8" height="4"><path d="M0 0h8L4 4z" fill="#777" /></svg>
      </button>
      <input aria-label="Command" placeholder="Type a command" className="min-w-0 flex-1 bg-transparent px-1.5 font-['DejaVu_Sans_Mono',monospace] text-xs italic outline-none placeholder:text-[#949494]" />
      <button type="button" aria-label="History" className="mr-[3px]"><svg width="7" height="4"><path d="M3.500 0L7 4H0z" fill="#858585" /></svg></button>
    </form>
  );
}

function StatusGroup({ children, className }: { children: ReactNode; className?: string }) {
  return <div className={clsx("flex h-6 items-center justify-center bg-[#3b4453]", className)}>{children}</div>;
}

function StatusBar() {
  return (
    <footer className="flex h-[35px] items-start justify-between border-t-4 border-b-2 border-t-[#3b4453] border-b-[#303030] bg-[#222933] text-[#eee]">
      <div className="flex">
        <button type="button" aria-label="Layouts" className="flex h-6 items-center pl-4"><Icon name="menu" /></button>
        <button type="button" className="ml-[9px] h-6 w-[69px] bg-[#3b4453] pt-0.5 font-bold [clip-path:polygon(10px_0,100%_0,59px_100%,0_100%)]">Model</button>
        <div className="flex h-6 items-center pt-0.5">
          <button type="button" className="w-14 pl-1.5 text-left">Layout1</button><Slash />
          <button type="button" className="w-[58px] pl-2 text-left">Layout2</button><Slash />
          <button type="button" aria-label="New layout" className="mx-2.5"><svg width="14" height="14"><path d="M7 0v14M0 7h14" stroke={L} strokeWidth="2" /></svg></button>
          <Slash />
        </div>
      </div>
      <div className="flex gap-[3px] pt-0.5 pr-px">
        <StatusGroup className="w-[47px]"><button type="button">MODEL</button></StatusGroup>
        <StatusGroup><IconButton name="grid" /><IconButton name="dots" /><CaretButton big label="Snap settings" className="w-4" /></StatusGroup>
        <StatusGroup>
          <IconButton name="ortho" /><IconButton name="polar" /><CaretButton big label="Polar settings" className="w-4" />
          <IconButton name="iso" className="w-[22px]" /><CaretButton big label="Isometric settings" className="w-4" />
        </StatusGroup>
        <StatusGroup>
          <IconButton name="track" /><IconButton name="osnap" className="w-6 bg-[#5f93c8]" /><CaretButton big label="Snap list" className="w-4" />
        </StatusGroup>
        <StatusGroup>
          <IconButton name="anno1" className="w-6 bg-[#5f93c8]" /><IconButton name="anno2" /><IconButton name="anno3" />
          <button type="button" className="flex w-[34px] items-center justify-center gap-1">1:1<Caret big /></button>
        </StatusGroup>
        <StatusGroup><IconButton name="gear" /><CaretButton big label="Workspaces" className="w-4" /></StatusGroup>
        <StatusGroup><IconButton name="plus" /></StatusGroup>
        <StatusGroup><IconButton name="shapes" /></StatusGroup>
        <StatusGroup className="w-[29px]"><IconButton name="dwg" /></StatusGroup>
        <StatusGroup><IconButton name="full" /></StatusGroup>
        <StatusGroup><IconButton name="menu" /></StatusGroup>
      </div>
    </footer>
  );
}

export default function App() {
  return (
    <div className="flex h-screen flex-col overflow-hidden bg-[#222933] font-['Open_Sans',sans-serif] text-xs text-[#f0f0f0]">
      <TitleBar />
      <RibbonTabs />
      <Ribbon />
      <FileTabs />
      <main className="relative min-h-0 flex-1 bg-white">
        <Drawing />
        <div className="absolute top-1.5 left-[3px] text-[#222]">
          <button type="button">[−]</button><button type="button">[Top]</button><button type="button">[2D Wireframe]</button>
        </div>
        <div className="absolute top-[9px] right-2.5 flex items-end gap-2">
          <button type="button" aria-label="Minimize drawing"><svg width="12" height="12"><path d="M.5 7.500h11v4H.5z" fill="#eee" stroke="#6d6d6d" /></svg></button>
          <button type="button" aria-label="Restore drawing"><svg width="12" height="12" fill="#eee" stroke="#5f5f5f"><path d="M3.500.500h8v8h-8z" /><path d="M.5 3.500h8v8h-8zM3.500 6.500h2v2h-2z" /></svg></button>
          <button type="button" aria-label="Close drawing"><svg width="12" height="12"><path d="M1 1h3l2 2.500L8 1h3v2L8.500 6 11 9v2H8L6 8.500 4 11H1V9l2.500-3L1 3z" fill="#ddd" stroke="#5f5f5f" /></svg></button>
        </div>
        <ViewCube />
        <NavBar />
        <CommandLine />
      </main>
      <StatusBar />
    </div>
  );
}
